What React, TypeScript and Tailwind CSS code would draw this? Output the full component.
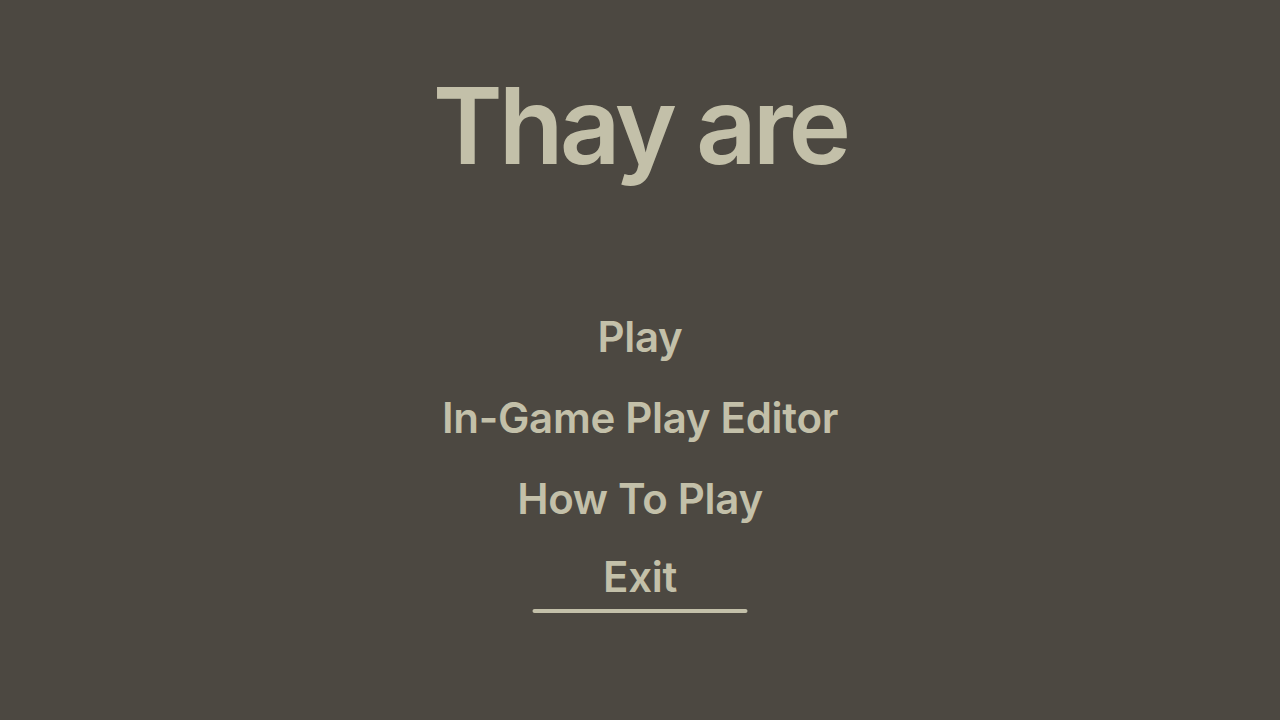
export default function App() {
  const items = ["Play", "In-Game Play Editor", "How To Play"];
  return (
    <div
      className="flex h-[720px] w-[1280px] flex-col items-center bg-[#4c4841] text-[#c3c0a9]"
      style={{ fontFamily: "Inter, 'Noto Sans', sans-serif" }}
    >
      <h1 className="mt-[62px] text-[106px] font-semibold leading-[128px] tracking-[-4px]">Thay are</h1>
      <div className="mt-[106px] flex flex-col items-center">
        {items.map((t) => (
          <button key={t} className="h-[81px] text-[42px] font-semibold leading-[81px] tracking-[-0.3px]">
            {t}
          </button>
        ))}
        <button className="relative h-[81px] pb-[6px] text-[42px] font-semibold leading-[64px] tracking-[-0.3px]">
          Exit
          <span className="absolute left-1/2 top-[70px] h-[4px] w-[215px] -translate-x-1/2 rounded-full bg-[#c3c0a9]" />
        </button>
      </div>
    </div>
  );
}
